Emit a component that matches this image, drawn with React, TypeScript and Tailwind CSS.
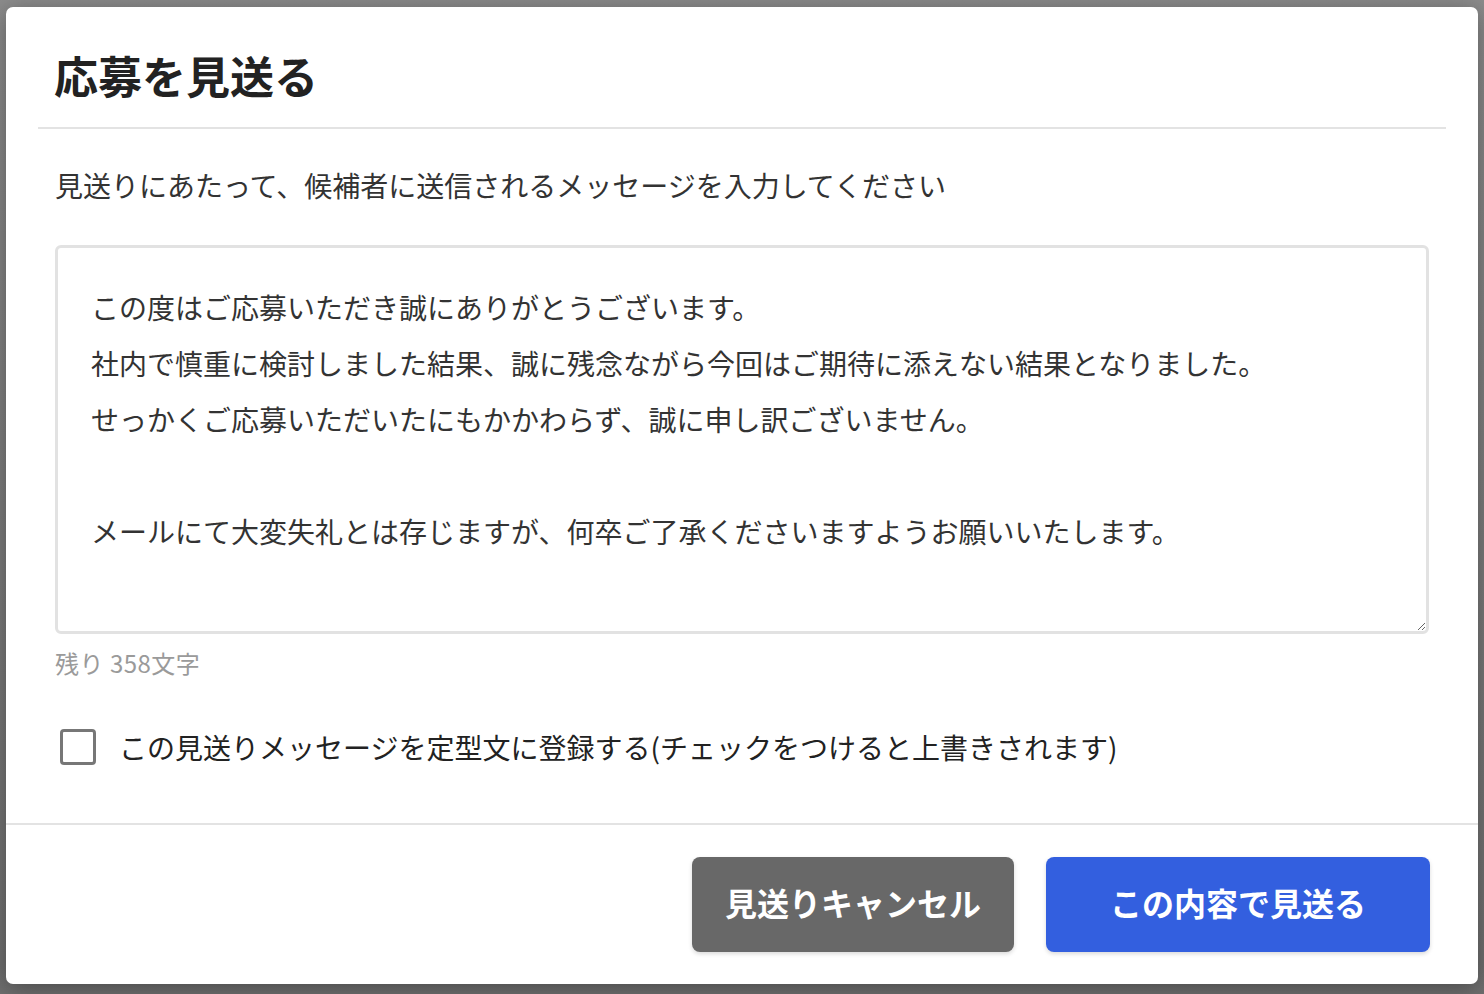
import { useState } from 'react'

const jp = "font-['Noto_Sans_CJK_JP','Noto_Sans',sans-serif]"

const defaultMessage = [
  'この度はご応募いただき誠にありがとうございます。',
  '社内で慎重に検討しました結果、誠に残念ながら今回はご期待に添えない結果となりました。',
  'せっかくご応募いただいたにもかかわらず、誠に申し訳ございません。',
  '',
  'メールにて大変失礼とは存じますが、何卒ご了承くださいますようお願いいたします。',
].join('\n')

const MAX_LENGTH = 500

export default function App() {
  const [message, setMessage] = useState(defaultMessage)
  const [saveTemplate, setSaveTemplate] = useState(false)
  const remaining = 358 + (defaultMessage.length - message.length)

  return (
    <div className={`${jp} w-full h-[994px] overflow-hidden bg-gradient-to-b from-[#8c8c8c] to-[#6f6f6f] pt-[7px] px-[6px]`}>
      <div className="w-[1472px] h-[977px] bg-white rounded-[7px] shadow-[0_4px_24px_rgba(0,0,0,0.35)] flex flex-col">
        {/* header */}
        <div className="px-8">
          <div className="pt-[46px] pb-[30px] pl-[16px] border-b-2 border-[#e3e3e3]">
            <h2 className="text-[44px] leading-[44px] font-bold text-[#222]">応募を見送る</h2>
          </div>
        </div>

        {/* body */}
        <div className="flex-1 px-[49px] pt-[36px]">
          <p className="text-[28px] leading-[40px] text-[#333]">
            見送りにあたって、候補者に送信されるメッセージを入力してください
          </p>
          <textarea
            value={message}
            onChange={(e) => setMessage(e.target.value.slice(0, MAX_LENGTH))}
            className={`${jp} mt-[40px] block w-full h-[389px] border-[3px] border-[#e2e2e2] rounded-[6px] pt-[31px] px-[33px] text-[28px] leading-[56px] text-[#333] outline-none`}
          />
          <p className="mt-[12px] text-[24px] leading-[34px] text-[#9a9a9a] tracking-[0.5px]">残り {remaining}文字</p>
          <label className="mt-[47px] flex items-center h-[40px] cursor-pointer">
            <input
              type="checkbox"
              checked={saveTemplate}
              onChange={(e) => setSaveTemplate(e.target.checked)}
              className="appearance-none ml-[5px] w-9 h-9 border-[3px] border-[#777] rounded-[4px] bg-white checked:bg-[#335fdf] checked:border-[#335fdf]"
            />
            <span className="ml-[23px] text-[28px] leading-[40px] text-[#222]">
              この見送りメッセージを定型文に登録する(チェックをつけると上書きされます)
            </span>
          </label>
        </div>

        {/* footer */}
        <div className="border-t-2 border-[#e3e3e3] py-[32px] pr-[48px] flex justify-end gap-8">
          <button className="w-[322px] h-[95px] pb-[5px] rounded-[8px] bg-[#686868] text-white text-[32px] font-bold shadow-[0_2px_4px_rgba(0,0,0,0.15)]">
            見送りキャンセル
          </button>
          <button className="w-[384px] h-[95px] pb-[5px] rounded-[8px] bg-[#335fdf] text-white text-[32px] font-bold shadow-[0_2px_4px_rgba(0,0,0,0.15)]">
            この内容で見送る
          </button>
        </div>
      </div>
    </div>
  )
}
